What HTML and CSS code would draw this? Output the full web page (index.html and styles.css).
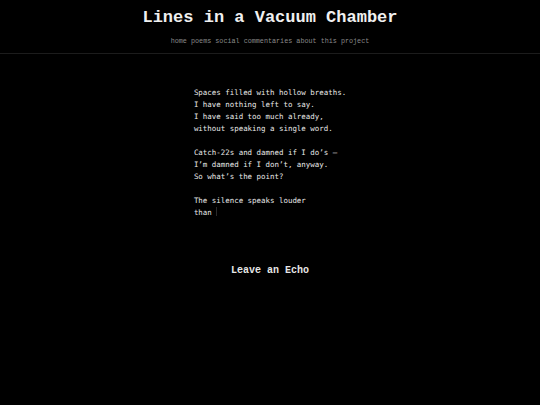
FILE: index.html
```html
<!DOCTYPE html>
<html>
<head>
<meta charset="utf-8">
<link rel="stylesheet" href="styles.css">
</head>
<body>
<header class="site-header">
  <h1 class="site-title">Lines in a Vacuum Chamber</h1>
  <nav class="site-nav">
    <a href="#">home</a> <a href="#">poems</a> <a href="#">social commentaries</a> <a href="#">about this project</a>
  </nav>
</header>
<main class="content">
  <div class="poem">
    <p class="stanza">Spaces filled with hollow breaths.<br>I have nothing left to say.<br>I have said too much already,<br>without speaking a single word.</p>
    <p class="stanza">Catch-22s and damned if I do’s —<br>I’m damned if I don’t, anyway.<br>So what’s the point?</p>
    <p class="stanza">The silence speaks louder<br>than <span class="caret"></span></p>
  </div>
  <h2 class="echo">Leave an Echo</h2>
</main>
</body>
</html>
```
FILE: styles.css
```css
html, body {
  margin: 0;
  padding: 0;
  background: #000;
}
body {
  color: #e6e6e6;
  font-family: "Liberation Mono", "Courier New", monospace;
}
.site-header {
  text-align: center;
  padding-top: 8px;
  padding-bottom: 7px;
  border-bottom: 1px solid #1c1c1c;
}
.site-title {
  margin: 0;
  font-size: 17px;
  line-height: 20px;
  font-weight: bold;
  color: #f0f0f0;
}
.site-nav {
  margin-top: 8px;
  font-size: 6.75px;
  line-height: 10px;
}
.site-nav a {
  color: #8a8a8a;
  text-decoration: none;
}
.content {
  padding-top: 33px;
}
.poem {
  width: fit-content;
  margin: 0 auto;
  font-family: "DejaVu Sans Mono", monospace;
  font-size: 7.45px;
  line-height: 12px;
  color: #e8e8e8;
}
.stanza {
  margin: 0 0 12px 0;
}
.stanza:last-child {
  margin-bottom: 0;
}
.caret {
  display: inline-block;
  width: 0;
  height: 9px;
  border-left: 1px solid #2a2a2a;
  vertical-align: -1px;
}
.echo {
  margin: 46px 0 0 0;
  text-align: center;
  font-size: 10px;
  line-height: 12px;
  font-weight: bold;
  color: #e6e6e6;
}
```
